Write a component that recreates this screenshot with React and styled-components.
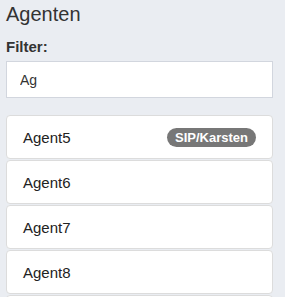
import React from "react";
import styled, { createGlobalStyle } from "styled-components";

const Global = createGlobalStyle`
  html, body { margin: 0; padding: 0; background: #eaedf2; }
  body { font-family: "Liberation Sans", Arial, sans-serif; color: #333; }
  * { box-sizing: border-box; }
`;

const Panel = styled.div`
  padding: 0 12px 0 6px;
  display: flex;
  flex-direction: column;
`;

const Title = styled.h3`
  margin: 2px 0 0;
  font-size: 20px;
  font-weight: 400;
  line-height: 24px;
  color: #333;
`;

const Label = styled.label`
  margin-top: 11px;
  font-size: 15px;
  font-weight: 700;
  line-height: 20px;
`;

const Input = styled.input`
  margin-top: 4px;
  height: 37px;
  border: 1px solid #d2d6de;
  background: #fff;
  padding: 0 13px;
  font-family: inherit;
  font-size: 14px;
  color: #333;
  outline: none;
`;

const List = styled.div`
  margin-top: 17px;
  display: flex;
  flex-direction: column;
  gap: 1px;
`;

const Item = styled.div`
  display: flex;
  align-items: center;
  justify-content: space-between;
  flex-shrink: 0;
  height: 44px;
  padding: 0 16px;
  background: #fff;
  border: 1px solid #dcdcdc;
  border-radius: 4px;
  font-size: 15px;
  color: #222;
`;

const Badge = styled.span`
  background: #777;
  color: #fff;
  font-size: 13px;
  font-weight: 700;
  line-height: 13px;
  padding: 3px 8px;
  border-radius: 10px;
`;

const agents = [
  { name: "Agent5", badge: "SIP/Karsten" },
  { name: "Agent6" },
  { name: "Agent7" },
  { name: "Agent8" },
  { name: "Agent9" },
];

export default function App() {
  return (
    <>
      <Global />
      <Panel>
        <Title>Agenten</Title>
        <Label>Filter:</Label>
        <Input defaultValue="Ag" />
        <List>
          {agents.map((a) => (
            <Item key={a.name}>
              <span>{a.name}</span>
              {a.badge && <Badge>{a.badge}</Badge>}
            </Item>
          ))}
        </List>
      </Panel>
    </>
  );
}
